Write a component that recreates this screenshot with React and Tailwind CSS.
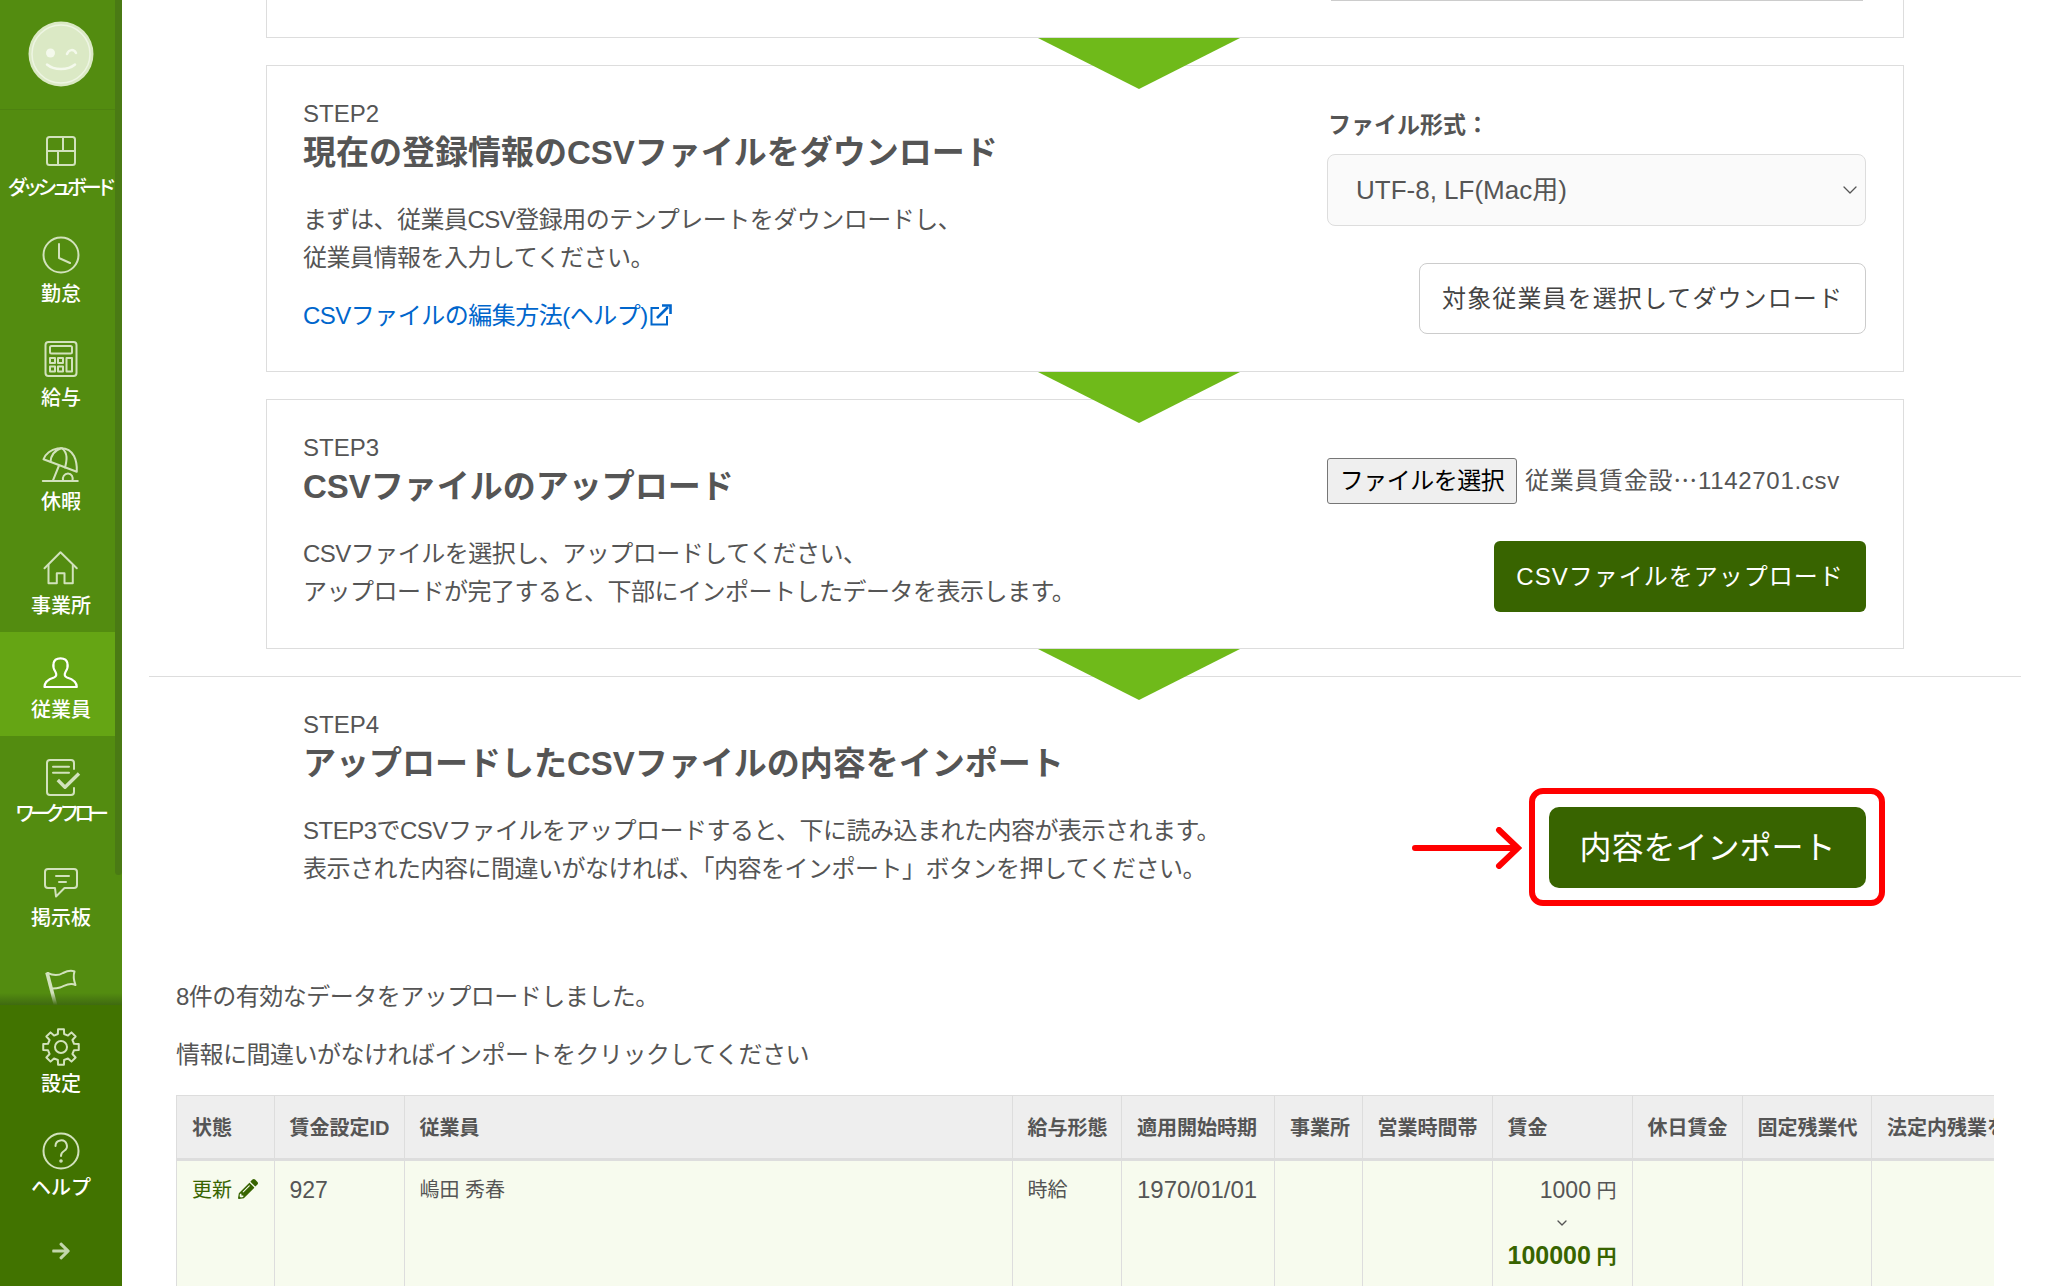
import React from 'react';
import { FaArrowRight, FaPencilAlt } from 'react-icons/fa';
import { ChevronDown } from 'lucide-react';

const S = { fill: 'none', stroke: 'currentColor', strokeWidth: 2, strokeLinecap: 'round', strokeLinejoin: 'round' };

function gearPoints() {
  const pts = [];
  for (let i = 0; i < 8; i++) {
    const a = (i / 8) * Math.PI * 2 - Math.PI / 2;
    const step = Math.PI / 8;
    const add = (r, o) => pts.push(`${(20 + r * Math.cos(a + o)).toFixed(2)},${(20 + r * Math.sin(a + o)).toFixed(2)}`);
    add(18, -step * 0.42);
    add(18, step * 0.42);
    add(13.4, step * 0.6);
    add(13.4, step * 1.4);
  }
  return pts.join(' ');
}

const icons = {
  dash: (
    <g {...S}>
      <rect x="6" y="6" width="28" height="28" rx="2.5" />
      <path d="M6 20H34M22 6V20M17 20V34" />
    </g>
  ),
  clock: (
    <g {...S}>
      <circle cx="20" cy="20" r="17.5" />
      <path d="M18 9V23L29 28" />
    </g>
  ),
  calc: (
    <g {...S}>
      <rect x="4.5" y="3" width="31" height="34" rx="3" />
      <rect x="9" y="7" width="22" height="7.5" rx="1.5" />
      <rect x="9" y="19" width="5" height="5" />
      <rect x="17" y="19" width="5" height="5" />
      <rect x="9" y="27.5" width="5" height="5" />
      <rect x="17" y="27.5" width="5" height="5" />
      <rect x="25.5" y="19" width="5.5" height="13.5" />
    </g>
  ),
  beach: (
    <g {...S}>
      <path d="M2.5 16.3C6 5 26 0 33 13C36 19 36 24 35.8 28.7Z" />
      <path d="M9.5 18.8C10 11 15 7 20 5.2M24 24.6C26 17 27 10 21 5.2" />
      <path d="M17.8 23L11.8 37.8M1.8 38H36.8" />
      <path d="M22 38C21 34 23.5 30.5 27 30.5C30.5 30.5 32.5 34 31.5 38" />
    </g>
  ),
  home: (
    <g {...S}>
      <path d="M3.5 21.3L19.5 5.3L35.8 21.3" />
      <path d="M7.5 18V36.3H15.8V26.3H23.5V36.3H31.8V18" />
    </g>
  ),
  user: (
    <g {...S} strokeWidth="2.2">
      <path d="M3.5 36C3.5 30 8 28 13 26.5C16 25.5 15.5 23 14.5 21C12.5 18 12 15 12.5 12.5C13 9 16 7.3 19.5 7.3C23 7.3 26 9 26.5 12.5C27 15 26.5 18 24.5 21C23.5 23 23 25.5 26 26.5C31 28 35.8 30 35.8 36Z" />
    </g>
  ),
  flow: (
    <g {...S}>
      <path d="M33 14V8A3 3 0 0 0 30 5H9A3 3 0 0 0 6 8V37A3 3 0 0 0 9 40H30A3 3 0 0 0 33 37V33" />
      <path d="M12 11.7H28M12 17.7H28" />
      <path d="M16.8 25L24 32.3L38 18.5" strokeWidth="3.4" strokeLinecap="butt" />
    </g>
  ),
  chat: (
    <g {...S}>
      <path d="M7 10H33A3 3 0 0 1 36 13V26A3 3 0 0 1 33 29H23.5L15 37.5L14 29H7A3 3 0 0 1 4 26V13A3 3 0 0 1 7 10Z" />
      <path d="M15 17H28M18 23H25" />
    </g>
  ),
  flag: (
    <g {...S}>
      <path d="M6 9.5L15 44" strokeWidth="3.6" strokeLinecap="butt" />
      <path d="M6.5 10C13 13 17 13 22 10C26 8 30 7 33.5 8.5C32 13 33 18 34.5 22C28 19 24 23 19 24.5C16 25.5 14 25.5 11.5 25.5" />
    </g>
  ),
  gear: (
    <g {...S}>
      <polygon points={gearPoints()} />
      <circle cx="20" cy="20" r="6" />
    </g>
  ),
  help: (
    <g {...S}>
      <circle cx="20" cy="20" r="17.5" />
      <path d="M14.5 15A5.7 5.7 0 1 1 23 20C21 21.2 20 22.5 20 25" />
      <circle cx="20" cy="30" r="0.8" />
    </g>
  ),
};

function NavItem({ icon, label, active, tight, low }) {
  return (
    <div className={`h-[104px] shrink-0 pt-[19px] flex flex-col items-center ${active ? 'bg-[#65a514] text-white' : 'text-[#d2e2bc]'}`}>
      <svg viewBox="0 0 40 40" className="w-[40px] h-[40px] shrink-0 overflow-visible">{icons[icon]}</svg>
      <div className={`${low ? 'mt-[7px]' : 'mt-[5px]'} text-[20px] leading-[24px] font-medium text-white whitespace-nowrap ${tight ? 'tracking-[-5.2px] -ml-[3px]' : ''}`}>{label}</div>
    </div>
  );
}

function Sidebar() {
  return (
    <aside className="w-[122px] shrink-0 h-full flex flex-col bg-[#538c10]">
      <div className="relative h-[1005px] shrink-0 overflow-hidden">
        <div className="h-[110px] border-b border-[#4d8210] flex items-center justify-center">
          <svg viewBox="0 0 68 68" className="w-[68px] h-[68px] mt-[-2px]">
            <circle cx="34" cy="34" r="32.5" fill="#dbe9c5" />
            <circle cx="34" cy="34" r="29" fill="none" stroke="#eef5e3" strokeWidth="1.5" />
            <circle cx="23.5" cy="33" r="4.5" fill="#f4f9ec" />
            <path d="M40 34C42 29 47 29 49 33" fill="none" stroke="#f4f9ec" strokeWidth="2.5" strokeLinecap="round" />
            <path d="M20 44.5C27 50.5 41 50.5 48 44.5" fill="none" stroke="#f4f9ec" strokeWidth="2.5" strokeLinecap="round" />
          </svg>
        </div>
        <div className="mt-[2px] flex flex-col">
          <NavItem icon="dash" label="ダッシュボード" tight />
          <NavItem icon="clock" label="勤怠" low />
          <NavItem icon="calc" label="給与" low />
          <NavItem icon="beach" label="休暇" low />
          <NavItem icon="home" label="事業所" low />
          <NavItem icon="user" label="従業員" active low />
          <NavItem icon="flow" label="ワークフロー" tight low />
          <NavItem icon="chat" label="掲示板" low />
          <NavItem icon="flag" label="" />
        </div>
        <div className="absolute top-0 right-0 w-[7px] h-[875px] rounded-b-[4px] bg-[#4a7a14]" />
        <div className="absolute bottom-0 left-0 right-0 h-[12px] bg-gradient-to-b from-transparent to-[#3f6a10]" />
      </div>
      <div className="flex-1 bg-[#417300] pt-[3px] flex flex-col items-stretch">
        <NavItem icon="gear" label="設定" />
        <NavItem icon="help" label="ヘルプ" />
        <div className="flex justify-center pt-[25px] text-[#c3d6ac]">
          <FaArrowRight className="w-[20px] h-[20px]" />
        </div>
      </div>
    </aside>
  );
}

function Triangle() {
  return (
    <div className="absolute top-[calc(100%+1px)] left-[771px] z-10 w-0 h-0 border-l-[101px] border-r-[101px] border-t-[51px] border-l-transparent border-r-transparent border-t-[#6fba1a]" />
  );
}

function StepText({ step, title, children }) {
  return (
    <div className="flex flex-col text-[#555]">
      <div className="text-[24px] leading-[31px]">{step}</div>
      <div className="text-[33px] leading-[48px] font-bold whitespace-nowrap">{title}</div>
      <div className="mt-[24px] text-[24px] leading-[38px] whitespace-nowrap tracking-[-0.5px]">{children}</div>
    </div>
  );
}

function ExtIcon() {
  return (
    <svg viewBox="0 0 24 24" className="inline-block w-[24px] h-[24px] align-[-3px] text-[#0066cc]" fill="none" stroke="currentColor">
      <path d="M11 5H3.5V21.5H19V13" strokeWidth="2" />
      <path d="M9 15L20 4" strokeWidth="2.6" />
      <path d="M14 2.5H22.5V11" strokeWidth="2.6" />
    </svg>
  );
}

const cols = [97.5, 130, 608, 109.5, 153, 87.5, 130, 140, 110, 129.5, 260];
const heads = ['状態', '賃金設定ID', '従業員', '給与形態', '適用開始時期', '事業所', '営業時間帯', '賃金', '休日賃金', '固定残業代', '法定内残業を'];

function DataTable() {
  const td = 'border border-[#dddddd] align-top px-[15px] pt-[13px] text-[20px] leading-[32px] text-[#555]';
  return (
    <div className="mt-[21px] mx-[27px] overflow-hidden">
      <table className="table-fixed border-collapse w-[1955px]">
        <colgroup>
          {cols.map((w, i) => (
            <col key={i} style={{ width: w }} />
          ))}
        </colgroup>
        <thead>
          <tr className="h-[64px] bg-[#eeeeee] border-b-[3px] border-[#dddddd]">
            {heads.map((h) => (
              <th key={h} className="border border-[#dddddd] border-b-[3px] px-[15px] pt-[2px] text-left text-[20px] font-bold text-[#555] whitespace-nowrap">{h}</th>
            ))}
          </tr>
        </thead>
        <tbody>
          <tr className="h-[160px] bg-[#f7fbee]">
            <td className={td}>
              <span className="text-[#386400] whitespace-nowrap">更新 <FaPencilAlt className="inline-block w-[20px] h-[20px] align-[-2px]" /></span>
            </td>
            <td className={`${td} text-[23px]`}>927</td>
            <td className={td}>嶋田 秀春</td>
            <td className={td}>時給</td>
            <td className={`${td} text-[24px]`}>1970/01/01</td>
            <td className={td}></td>
            <td className={td}></td>
            <td className={`${td} text-right`}>
              <div className="whitespace-nowrap"><span className="text-[23px]">1000</span> 円</div>
              <div className="flex justify-center h-[32px] items-center text-[#555]"><ChevronDown className="w-[16px] h-[16px]" strokeWidth={2} /></div>
              <div className="whitespace-nowrap font-bold text-[#386400]"><span className="text-[25px]">100000</span> 円</div>
            </td>
            <td className={td}></td>
            <td className={td}></td>
            <td className={td}></td>
          </tr>
        </tbody>
      </table>
    </div>
  );
}

export default function App() {
  return (
    <div className="flex h-[1286px] w-[2048px] overflow-hidden bg-white font-['Liberation_Sans','Noto_Sans_CJK_JP',sans-serif]">
      <Sidebar />
      <main className="flex-1 min-w-0 overflow-hidden">
        <div className="mx-[27px]">
          <div className="mx-[117px] flex flex-col gap-[27px]">
            <section className="relative h-[38px] border border-t-0 border-[#dddddd] bg-white pl-[1064px]">
              <div className="w-[532px] h-[1px] bg-[#cccccc]" />
              <Triangle />
            </section>
            <section className="relative h-[307px] border border-[#dddddd] pl-[36px] pr-[37px] pt-[32px] flex justify-between">
              <StepText step="STEP2" title="現在の登録情報のCSVファイルをダウンロード">
                <div>まずは、従業員CSV登録用のテンプレートをダウンロードし、</div>
                <div>従業員情報を入力してください。</div>
                <div className="mt-[20px] text-[#0066cc]">CSVファイルの編集方法(ヘルプ)<ExtIcon /></div>
              </StepText>
              <div className="w-[539px] flex flex-col items-end">
                <div className="self-stretch text-[23px] leading-[32px] font-bold text-[#555] mt-[11px] pl-[1px]">ファイル形式：</div>
                <div className="self-stretch mt-[13px] h-[72px] rounded-[8px] border border-[#dddddd] bg-[#fafafa] pl-[28px] pr-[3px] flex items-center justify-between text-[26px] text-[#555]">
                  <span>UTF-8, LF(Mac用)</span>
                  <ChevronDown className="w-[24px] h-[24px]" strokeWidth={1.3} />
                </div>
                <div className="mt-[37px] h-[71px] px-[22px] rounded-[8px] border border-[#cccccc] bg-white flex items-center text-[24px] tracking-[1.1px] text-[#444] whitespace-nowrap">対象従業員を選択してダウンロード</div>
              </div>
              <Triangle />
            </section>
            <section className="relative h-[250px] border border-[#dddddd] pl-[36px] pr-[37px] pt-[32px] flex justify-between">
              <StepText step="STEP3" title="CSVファイルのアップロード">
                <div>CSVファイルを選択し、アップロードしてください、</div>
                <div>アップロードが完了すると、下部にインポートしたデータを表示します。</div>
              </StepText>
              <div className="w-[539px] flex flex-col items-end">
                <div className="self-stretch mt-[26px] flex items-center">
                  <div className="h-[46px] w-[190px] rounded-[3px] border border-[#767676] bg-[#efefef] flex items-center justify-center text-[24px] tracking-[-0.5px] text-black whitespace-nowrap">ファイルを選択</div>
                  <span className="ml-[8px] text-[24px] text-[#555] whitespace-nowrap tracking-[0.7px]">従業員賃金設⋯1142701.csv</span>
                </div>
                <div className="mt-[37px] h-[71px] w-[372px] rounded-[6px] bg-[#386400] flex items-center justify-center text-[24px] tracking-[1px] text-white whitespace-nowrap">CSVファイルをアップロード</div>
              </div>
              <Triangle />
            </section>
          </div>
          <div className="mt-[27px] border-t border-[#dddddd] pt-[32px] pl-[154px] pr-[155px] flex justify-between">
            <StepText step="STEP4" title="アップロードしたCSVファイルの内容をインポート">
              <div>STEP3でCSVファイルをアップロードすると、下に読み込まれた内容が表示されます。</div>
              <div>表示された内容に間違いがなければ、「内容をインポート」ボタンを押してください。</div>
            </StepText>
            <div className="relative mt-[98px] h-[81px] w-[317px] rounded-[10px] bg-[#386400] flex items-center justify-center text-[32px] text-white whitespace-nowrap">
              内容をインポート
              <div className="absolute -left-[20px] -right-[19px] -top-[19px] -bottom-[18px] rounded-[14px] border-[6px] border-[#ff0000]" />
              <svg viewBox="0 0 110 42" className="absolute -left-[137px] top-[20px] w-[110px] h-[42px]" fill="none" stroke="#ff0000" strokeWidth="6" strokeLinecap="round">
                <path d="M3 21H105M87 3L106 21L87 39" />
              </svg>
            </div>
          </div>
        </div>
        <div className="mt-[90px] mx-[54px] text-[24px] leading-[38px] tracking-[-0.5px] text-[#555] flex flex-col gap-[20px]">
          <div>8件の有効なデータをアップロードしました。</div>
          <div>情報に間違いがなければインポートをクリックしてください</div>
        </div>
        <div className="mx-[27px]">
          <DataTable />
        </div>
      </main>
    </div>
  );
}
